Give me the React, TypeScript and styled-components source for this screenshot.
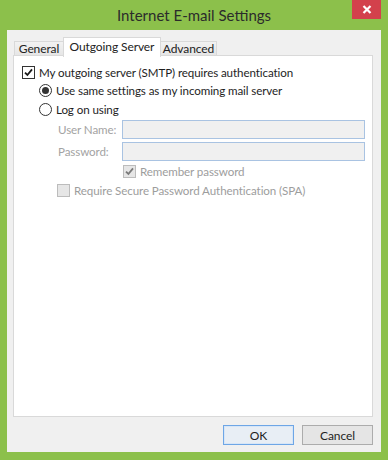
import React from "react";
import styled, { createGlobalStyle } from "styled-components";

const GlobalStyle = createGlobalStyle`
  html, body {
    margin: 0;
    padding: 0;
    width: 388px;
    height: 460px;
    overflow: hidden;
  }
  body {
    font-family: Lato, "Open Sans", sans-serif;
  }
`;

const Frame = styled.div`
  width: 388px;
  height: 460px;
  box-sizing: border-box;
  background: #8cc04b;
  display: flex;
  flex-direction: column;
  padding: 0 7px 8px 7px;
`;

const TitleBar = styled.div`
  height: 30px;
  position: relative;
  display: flex;
  align-items: center;
  justify-content: center;
  font-size: 15px;
  color: #2b2b2b;
  padding-bottom: 1px;
  box-sizing: border-box;
`;

const CloseButton = styled.div`
  position: absolute;
  top: 0;
  right: 0;
  width: 29px;
  height: 19px;
  background: #d3414c;
  display: flex;
  align-items: center;
  justify-content: center;
`;

const Client = styled.div`
  flex: 1;
  background: #f0f0f0;
  display: flex;
  flex-direction: column;
  padding: 7px 8px 7px 6px;
  font-size: 11.6px;
  letter-spacing: -0.1px;
  color: #1e1e1e;
`;

const TabStrip = styled.div`
  display: flex;
  align-items: flex-end;
  height: 19px;
  padding-left: 1px;
  margin-bottom: -1px;
  position: relative;
  z-index: 1;
`;

const Tab = styled.div<{ $active?: boolean; $w: number }>`
  box-sizing: border-box;
  width: ${(p) => p.$w}px;
  height: ${(p) => (p.$active ? "20px" : "15px")};
  padding-bottom: ${(p) => (p.$active ? "3px" : "0")};
  display: flex;
  align-items: center;
  justify-content: center;
  border: 1px solid #d9d9d9;
  border-bottom: ${(p) => (p.$active ? "none" : "1px solid #d9d9d9")};
  background: ${(p) =>
    p.$active ? "#ffffff" : "linear-gradient(#f2f2f2, #e6e6e6)"};
  margin-left: -1px;
  margin-bottom: ${(p) => (p.$active ? "-1px" : "0")};
  color: #222;
  font-size: 12px;
  white-space: nowrap;
  &:first-child {
    margin-left: 0;
  }
`;

const Panel = styled.div`
  flex: 1;
  background: #ffffff;
  border: 1px solid #d9d9d9;
  padding: 7px 0 0 8px;
  display: flex;
  flex-direction: column;
`;

const Row = styled.div<{ $indent?: number; $h?: number }>`
  display: flex;
  align-items: center;
  height: ${(p) => p.$h ?? 19}px;
  padding-left: ${(p) => p.$indent ?? 0}px;
  white-space: nowrap;
`;

const Label = styled.span<{ $disabled?: boolean }>`
  margin-left: 4px;
  color: ${(p) => (p.$disabled ? "#9d9d9d" : "#1e1e1e")};
`;

const FieldLabel = styled.span`
  width: 64px;
  flex-shrink: 0;
  color: #a3a3a3;
`;

const Field = styled.div`
  width: 243px;
  height: 19px;
  box-sizing: border-box;
  border: 1px solid #a9c3e2;
  background: #f0f0f0;
`;

const Box = styled.span<{ $disabled?: boolean }>`
  width: 13px;
  height: 13px;
  box-sizing: border-box;
  border: 1px solid ${(p) => (p.$disabled ? "#bcbcbc" : "#333333")};
  background: ${(p) => (p.$disabled ? "#e6e6e6" : "#ffffff")};
  display: flex;
  align-items: center;
  justify-content: center;
  flex-shrink: 0;
`;

const RadioCircle = styled.span`
  width: 13px;
  height: 13px;
  box-sizing: border-box;
  border: 1px solid #333333;
  border-radius: 50%;
  background: #ffffff;
  display: flex;
  align-items: center;
  justify-content: center;
  flex-shrink: 0;
`;

const Dot = styled.span`
  width: 7px;
  height: 7px;
  border-radius: 50%;
  background: #333333;
`;

const ButtonRow = styled.div`
  display: flex;
  justify-content: flex-end;
  gap: 8px;
  margin-top: 8px;
`;

const Button = styled.div<{ $default?: boolean }>`
  width: 71px;
  height: 20px;
  box-sizing: border-box;
  border: 1px solid ${(p) => (p.$default ? "#6ea6e6" : "#acacac")};
  background: ${(p) => (p.$default ? "#e8eef5" : "#e5e5e5")};
  box-shadow: ${(p) => (p.$default ? "inset 0 0 0 1px #d7e6f7" : "none")};
  display: flex;
  align-items: center;
  justify-content: center;
  font-size: 12px;
  color: #1e1e1e;
`;

function Check({ disabled, checked }: { disabled?: boolean; checked?: boolean }) {
  return (
    <Box $disabled={disabled}>
      {checked && (
        <svg width="9" height="9" viewBox="0 0 9 9">
          <path
            d="M1 4.6 L3.4 7 L8 1.4"
            fill="none"
            stroke={disabled ? "#7a7a7a" : "#1a1a1a"}
            strokeWidth="1.8"
          />
        </svg>
      )}
    </Box>
  );
}

function Radio({ selected }: { selected?: boolean }) {
  return <RadioCircle>{selected && <Dot />}</RadioCircle>;
}

export default function App() {
  return (
    <>
      <GlobalStyle />
      <Frame>
        <TitleBar>
          Internet E-mail Settings
          <CloseButton>
            <svg width="10" height="9" viewBox="0 0 10 9">
              <path d="M1.5 1 L8.5 8 M8.5 1 L1.5 8" stroke="#fff" strokeWidth="2.2" />
            </svg>
          </CloseButton>
        </TitleBar>
        <Client>
          <TabStrip>
            <Tab $w={50}>General</Tab>
            <Tab $w={98} $active>
              Outgoing Server
            </Tab>
            <Tab $w={57}>Advanced</Tab>
          </TabStrip>
          <Panel>
            <Row $h={18}>
              <Check checked />
              <Label>My outgoing server (SMTP) requires authentication</Label>
            </Row>
            <Row $indent={17}>
              <Radio selected />
              <Label>Use same settings as my incoming mail server</Label>
            </Row>
            <Row $indent={17} $h={18}>
              <Radio />
              <Label>Log on using</Label>
            </Row>
            <Row $indent={36} $h={22}>
              <FieldLabel>User Name:</FieldLabel>
              <Field />
            </Row>
            <Row $indent={36} $h={22}>
              <FieldLabel>Password:</FieldLabel>
              <Field />
            </Row>
            <Row $indent={101}>
              <Check checked disabled />
              <Label $disabled>Remember password</Label>
            </Row>
            <Row $indent={35}>
              <Check disabled />
              <Label $disabled>Require Secure Password Authentication (SPA)</Label>
            </Row>
          </Panel>
          <ButtonRow>
            <Button $default>OK</Button>
            <Button>Cancel</Button>
          </ButtonRow>
        </Client>
      </Frame>
    </>
  );
}
